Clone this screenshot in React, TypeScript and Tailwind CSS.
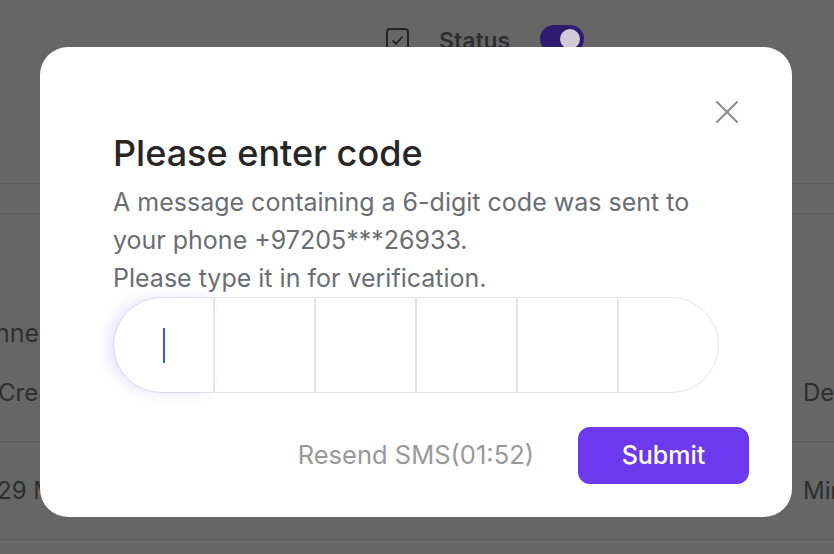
import React from "react";

function CloseIcon() {
  return (
    <svg width="24" height="24" viewBox="0 0 24 24" fill="none">
      <path d="M2 2L22 22M22 2L2 22" stroke="#8a8a8a" strokeWidth="2" strokeLinecap="round" />
    </svg>
  );
}

function Background() {
  return (
    <div className="flex h-[554px] w-[834px] flex-col bg-[#666666] text-[#2e2e2e]">
      <div className="flex h-[184px] shrink-0 border-b border-[#5c5c5c] pt-[25px]">
        <div className="ml-[386px] mt-[3px] flex h-[25px] w-[23px] items-center justify-center rounded-[4px] border-2 border-[#242424]">
          <svg width="13" height="11" viewBox="0 0 13 11" fill="none">
            <path d="M1.5 5.5L5 9L11.5 1.5" stroke="#242424" strokeWidth="1.8" />
          </svg>
        </div>
        <div className="ml-[30px] mt-[2px] text-[23px] font-semibold leading-[28px]">Status</div>
        <div className="ml-[30px] flex h-[28px] w-[44px] items-center justify-end rounded-full bg-[#2e1a6e] pr-[4px]">
          <div className="h-[20px] w-[20px] rounded-full bg-[#cfcbd9]" />
        </div>
      </div>
      <div className="h-[30px] shrink-0 border-b border-[#5c5c5c]" />
      <div className="flex h-[228px] shrink-0 flex-col border-b border-[#5c5c5c]">
        <div className="ml-[-5px] mt-[104px] whitespace-nowrap text-[25px] leading-[30px]">nnel</div>
        <div className="mt-[30px] flex justify-between whitespace-nowrap text-[24px] leading-[30px]">
          <span className="ml-[-2px]">Created</span>
          <span className="w-[31px] overflow-hidden">Deleted</span>
        </div>
      </div>
      <div className="flex h-[98px] shrink-0 items-center justify-between border-b border-[#5c5c5c] text-[24px] leading-[30px]">
        <span className="ml-[-3px] whitespace-nowrap">29 May</span>
        <span className="w-[31px] overflow-hidden whitespace-nowrap">Min</span>
      </div>
    </div>
  );
}

export default function App() {
  const cells = [0, 1, 2, 3, 4, 5];
  return (
    <div className="relative h-[554px] w-[834px] overflow-hidden font-['Inter',_'Noto_Sans',_sans-serif]">
      <Background />
      <div className="absolute left-[40px] top-[47px] flex h-[470px] w-[752px] flex-col rounded-[28px] bg-white pl-[73px] pr-[43px]">
        <button className="absolute right-[53px] top-[53px] flex h-[24px] w-[24px] items-center justify-center">
          <CloseIcon />
        </button>
        <h1 className="mt-[86px] text-[36px] font-medium leading-[40px] text-[#262626]">Please enter code</h1>
        <p className="mt-[10px] max-w-[600px] text-[25px] leading-[38px] text-[#6b6d72]">
          A message containing a 6-digit code was sent to your phone +97205***26933.
          <br />
          Please type it in for verification.
        </p>
        <div className="flex h-[96px] w-[606px] rounded-full border border-[#e6e6e6]">
          {cells.map((i) => (
            <div
              key={i}
              className={
                i === 0
                  ? "flex flex-1 items-center justify-center rounded-l-full shadow-[-6px_0_14px_rgba(110,80,255,0.16)]"
                  : i === 5
                  ? "flex flex-1 items-center justify-center rounded-r-full border-l-2 border-[#e6e6e6]"
                  : "flex flex-1 items-center justify-center border-l-2 border-[#e6e6e6]"
              }
            >
              {i === 0 && <div className="h-[35px] w-[2px] bg-[#3358e8]" />}
            </div>
          ))}
        </div>
        <div className="mt-[34px] flex items-center justify-end gap-[44px]">
          <span className="text-[25.5px] text-[#999999]">Resend SMS(01:52)</span>
          <button className="flex h-[57px] w-[171px] items-center justify-center rounded-[12px] bg-[#6c39ee] text-[25px] font-medium text-white">
            Submit
          </button>
        </div>
      </div>
    </div>
  );
}
